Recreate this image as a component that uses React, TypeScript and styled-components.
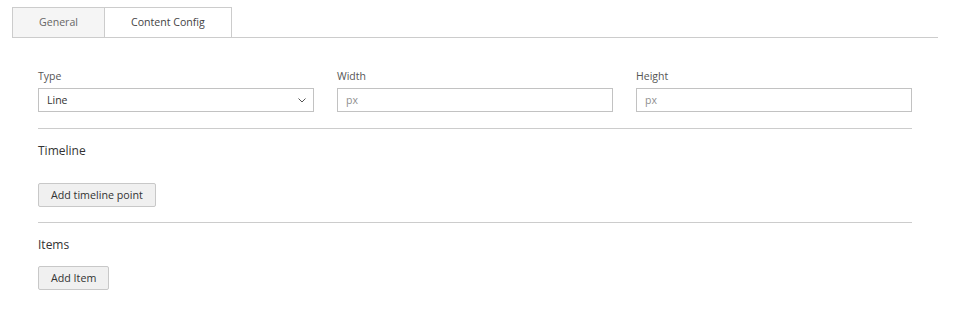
import styled, { createGlobalStyle } from "styled-components";

const GlobalStyle = createGlobalStyle`
  body {
    margin: 0;
    background: #fff;
    font-family: "Open Sans", "Liberation Sans", sans-serif;
    color: #333;
  }
`;

const App = () => {
  return (
    <Page>
      <GlobalStyle />
      <TabBar>
        <Tab>General</Tab>
        <Tab $active>Content Config</Tab>
      </TabBar>
      <Panel>
        <FieldRow>
          <Field>
            <Label>Type</Label>
            <SelectBox>
              <span>Line</span>
              <svg width="8" height="5" viewBox="0 0 8 5">
                <path d="M0.5 0.5 L4 4 L7.5 0.5" fill="none" stroke="#555" strokeWidth="1" />
              </svg>
            </SelectBox>
          </Field>
          <Field>
            <Label>Width</Label>
            <TextInput placeholder="px" />
          </Field>
          <Field>
            <Label>Height</Label>
            <TextInput placeholder="px" />
          </Field>
        </FieldRow>
        <Divider />
        <SectionTitle>Timeline</SectionTitle>
        <ActionRow $gap={24}>
          <Button>Add timeline point</Button>
        </ActionRow>
        <Divider />
        <SectionTitle>Items</SectionTitle>
        <ActionRow $gap={13}>
          <Button>Add Item</Button>
        </ActionRow>
      </Panel>
    </Page>
  );
};

export default App;

const Page = styled.div`
  padding: 7px 18px 0 12px;
  width: 926px;
`;

const TabBar = styled.div`
  display: flex;
  border-bottom: 1px solid #ccc;
`;

const Tab = styled.div<{ $active?: boolean }>`
  height: 29px;
  line-height: 29px;
  padding: 0 26px;
  font-size: 10.6px;
  border: 1px solid #ccc;
  border-bottom: none;
  margin-right: -1px;
  background: ${(p) => (p.$active ? "#fff" : "#f5f5f5")};
  color: ${(p) => (p.$active ? "#444" : "#666")};
`;

const Panel = styled.div`
  padding: 31px 26px 0 26px;
  display: flex;
  flex-direction: column;
`;

const FieldRow = styled.div`
  display: grid;
  grid-template-columns: repeat(3, 1fr);
  column-gap: 23px;
`;

const Field = styled.div`
  display: flex;
  flex-direction: column;
`;

const Label = styled.label`
  font-size: 10.5px;
  line-height: 14px;
  color: #555;
  margin-bottom: 5px;
`;

const SelectBox = styled.div`
  box-sizing: border-box;
  height: 24px;
  border: 1px solid #c2c2c2;
  display: flex;
  align-items: center;
  justify-content: space-between;
  padding: 0 7px 0 8px;
  font-size: 10.5px;
  color: #333;
`;

const TextInput = styled.input`
  box-sizing: border-box;
  height: 24px;
  border: 1px solid #c2c2c2;
  padding: 0 8px;
  font-family: inherit;
  font-size: 10.5px;
  outline: none;
  &::placeholder {
    color: #8f8f8f;
  }
`;

const Divider = styled.div`
  height: 1px;
  background: #ccc;
  margin-top: 16px;
`;

const SectionTitle = styled.div`
  margin-top: 14px;
  font-size: 12px;
  line-height: 16px;
  color: #333;
`;

const ActionRow = styled.div<{ $gap: number }>`
  display: flex;
  margin-top: ${(p) => p.$gap}px;
  & + ${Divider} {
    margin-top: 15px;
  }
`;

const Button = styled.button`
  box-sizing: border-box;
  height: 24px;
  padding: 0 12px;
  border: 1px solid #c8c8c8;
  border-radius: 2px;
  background: #f0f0f0;
  font-family: inherit;
  font-size: 10.7px;
  color: #333;
  cursor: pointer;
`;
